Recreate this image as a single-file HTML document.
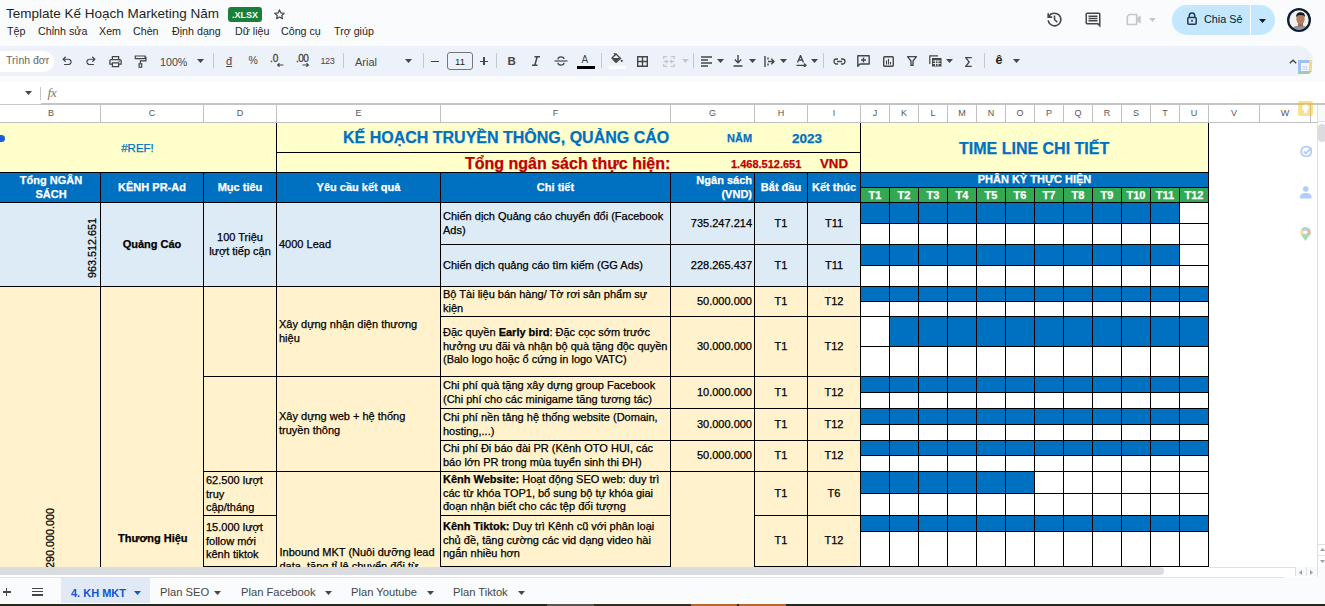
<!DOCTYPE html>
<html><head><meta charset="utf-8">
<style>
*{box-sizing:border-box;margin:0;padding:0}
html,body{width:1325px;height:606px;overflow:hidden;background:#f9fbfd;font-family:"Liberation Sans",sans-serif;position:relative}
body div,body svg{position:absolute}
#grid{left:0;top:0;width:1317px;height:567px;overflow:hidden}
.c{border:1px solid #000;font-size:11px;line-height:13.6px;color:#000;-webkit-text-stroke:0.25px currentColor;display:flex;align-items:center;overflow:hidden}
.c span{position:static}
.c.m{justify-content:center;text-align:center}
.c.l{justify-content:flex-start;text-align:left;padding:0 0 0 2px}
.c.r{justify-content:flex-end;text-align:right;padding:0 2px}
.c.b{font-weight:bold}
.c.hd{color:#fff;font-weight:bold}
.t{white-space:nowrap;font-size:11px;line-height:1;color:#000;-webkit-text-stroke:0.25px currentColor}
.rot{transform-origin:0 0}
.ch{top:104px;height:18px;font-size:9px;line-height:19px;text-align:center;color:#575757}
.menu{top:25px;font-size:10.7px;color:#1f1f1f;line-height:12px;white-space:nowrap}
.ic{fill:none;stroke:#444746;stroke-width:2}
.sep{top:53px;width:1px;height:15px;background:#c7c7c7}
.tab{top:586px;font-size:11.2px;line-height:12px;color:#444746;white-space:nowrap}
</style></head><body>
<!-- title bar -->
<div style="left:6px;top:6px;font-size:13.5px;line-height:16px;color:#1f1f1f;white-space:nowrap">Template Kế Hoạch Marketing Năm</div>
<div style="left:228px;top:7px;width:34px;height:15px;border-radius:3px;background:#188038;color:#fff;font-size:9px;font-weight:bold;line-height:16px;text-align:center">.XLSX</div>
<svg style="left:273px;top:8px" width="13" height="13" viewBox="0 0 24 24"><path d="M12 3.5l2.6 5.6 6.1.6-4.6 4.1 1.3 6-5.4-3.1-5.4 3.1 1.3-6-4.6-4.1 6.1-.6z" fill="none" stroke="#444746" stroke-width="2.2" stroke-linejoin="round"/></svg>
<div class="menu" style="left:7px">Tệp</div>
<div class="menu" style="left:38px">Chỉnh sửa</div>
<div class="menu" style="left:99px">Xem</div>
<div class="menu" style="left:133px">Chèn</div>
<div class="menu" style="left:172px">Định dạng</div>
<div class="menu" style="left:235px">Dữ liệu</div>
<div class="menu" style="left:281px">Công cụ</div>
<div class="menu" style="left:334px">Trợ giúp</div>

<!-- top right -->
<svg style="left:1045px;top:10px" width="19" height="19" viewBox="0 -960 960 960"><path fill="#444746" d="M480-120q-138 0-240.5-91.5T122-440h82q14 104 92.5 172T480-200q117 0 198.5-81.5T760-480q0-117-81.5-198.5T480-760q-69 0-129 32t-101 88h110v80H120v-240h80v94q51-64 124.5-99T480-840q75 0 140.5 28.5t114 77q48.5 48.5 77 114T840-480q0 75-28.5 140.5t-77 114q-48.5 48.5-114 77T480-120Zm112-192L440-464v-216h80v184l128 128-56 56Z"/></svg>
<svg style="left:1083.5px;top:10.5px" width="18" height="18" viewBox="0 -960 960 960"><path fill="#444746" d="M240-400h480v-80H240v80Zm0-120h480v-80H240v80Zm0-120h480v-80H240v80ZM880-80 720-240H160q-33 0-56.5-23.5T80-320v-480q0-33 23.5-56.5T160-880h640q33 0 56.5 23.5T880-800v720ZM160-320h594l46 45v-525H160v480Z"/></svg>
<svg style="left:1126px;top:13px" width="16" height="13" viewBox="0 0 24 19"><path d="M5 2h11v15H2V5z" fill="none" stroke="#c4c7c5" stroke-width="2.4" stroke-linejoin="round"/><path d="M17 7l5-3.5v12L17 12z" fill="#c4c7c5"/></svg>
<svg style="left:1149px;top:18px" width="7" height="4" viewBox="0 0 7 4"><path d="M0 0h7L3.5 4z" fill="#c4c7c5"/></svg>
<div style="left:1172px;top:5px;width:103px;height:30px;border-radius:15px;background:#c2e7ff"></div>
<div style="left:1250px;top:5px;width:1px;height:30px;background:#fff"></div>
<svg style="left:1187px;top:12px" width="10" height="13" viewBox="0 0 10 13"><path d="M2.3 5.5V3.8a2.7 2.7 0 0 1 5.4 0v1.7" fill="none" stroke="#27384a" stroke-width="1.5"/><rect x="0.8" y="5.5" width="8.4" height="6.7" rx="1" fill="none" stroke="#27384a" stroke-width="1.5"/><circle cx="5" cy="8.8" r="1" fill="#27384a"/></svg>
<div style="left:1204px;top:12.5px;font-size:10.8px;line-height:12px;color:#001d35;white-space:nowrap">Chia Sẻ</div>
<svg style="left:1259px;top:19px" width="7" height="4" viewBox="0 0 7 4"><path d="M0 0h7L3.5 4z" fill="#001d35"/></svg>
<svg style="left:1287px;top:8px" width="24" height="24" viewBox="0 0 24 24">
<defs><clipPath id="av"><circle cx="12" cy="12" r="9.7"/></clipPath></defs>
<circle cx="12" cy="12" r="12" fill="#0f1d2e"/>
<g clip-path="url(#av)"><rect width="24" height="24" fill="#f0f0f0"/><path d="M3 24c1.5-4.5 4.5-6.5 10-6.5s8 2 9 6.5z" fill="#8b94a3"/><rect x="11" y="13.5" width="5" height="5" fill="#9c6b50"/><ellipse cx="13.5" cy="11" rx="4.2" ry="5.2" fill="#b27d60"/><path d="M9 9.5c-.2-3.5 1.8-5.3 4.6-5.3 2.9 0 4.7 1.8 4.5 5.3-.8-1.7-2.3-2.4-4.5-2.4S9.8 7.8 9 9.5z" fill="#1a1616"/></g></svg>

<!-- toolbar -->
<div style="left:-30px;top:46px;width:1343px;height:30px;border-radius:15px;background:#edf2fa"></div>
<div style="left:-20px;top:51px;width:74px;height:21px;border-radius:11px;background:#fff"></div>
<div style="left:6px;top:54px;font-size:10.5px;line-height:12px;color:#666;white-space:nowrap;width:42.5px;overflow:hidden">Trình đơn</div>
<!-- undo redo -->
<svg style="left:60px;top:54px" width="14" height="14" viewBox="0 -960 960 960"><path fill="#444746" d="M280-200v-80h284q63 0 109.5-40T720-420q0-60-46.5-100T564-560H312l104 104-56 56-200-200 200-200 56 56-104 104h252q97 0 166.5 63T800-420q0 94-69.5 157T564-200H280Z"/></svg>
<svg style="left:84px;top:54px" width="14" height="14" viewBox="0 -960 960 960"><path fill="#444746" d="M396-200q-97 0-166.5-63T160-420q0-94 69.5-157T396-640h252L544-744l56-56 200 200-200 200-56-56 104-104H396q-63 0-109.5 40T240-420q0 60 46.5 100T396-280h284v80H396Z"/></svg>
<svg style="left:108px;top:54px" width="15" height="15" viewBox="0 -960 960 960"><path fill="#444746" d="M640-640v-120H320v120h-80v-200h480v200h-80Zm80 180q17 0 28.5-11.5T760-500q0-17-11.5-28.5T720-540q-17 0-28.5 11.5T680-500q0 17 11.5 28.5T720-460Zm-80 260v-160H320v160h320Zm80 80H240v-160H80v-240q0-51 35-85.5t85-34.5h560q51 0 85.5 34.5T880-520v240H720v160Zm80-240v-160q0-17-11.5-28.5T760-560H200q-17 0-28.5 11.5T160-520v160h80v-80h480v80h80Z"/></svg>
<svg style="left:133.5px;top:55px" width="13" height="13" viewBox="0 0 13 13"><path d="M1.3 1h9.8v2.6H1.3zM11.1 2.3h0.9v3.5H6.4v2.8" fill="none" stroke="#444746" stroke-width="1.2"/><rect x="5.1" y="8.8" width="2.6" height="3.4" fill="none" stroke="#444746" stroke-width="1.2"/></svg>
<div style="left:160px;top:55.5px;font-size:10.7px;line-height:12px;color:#444746">100%</div>
<svg style="left:197px;top:59px" width="7" height="4" viewBox="0 0 7 4"><path d="M0 0h7L3.5 4z" fill="#444746"/></svg>
<div class="sep" style="left:213px"></div>
<div style="left:226px;top:55px;font-size:11px;line-height:12px;color:#444746;text-decoration:underline">đ</div>
<div style="left:248.5px;top:55px;font-size:10.5px;line-height:11px;color:#444746">%</div>
<div style="left:270px;top:54px;font-size:10px;line-height:10px;color:#444746;-webkit-text-stroke:0.3px #444746">.0</div>
<svg style="left:277px;top:63px" width="7" height="4" viewBox="0 0 7 4"><path d="M0.5 2h6M2.5 0.3L0.7 2l1.8 1.7" fill="none" stroke="#444746" stroke-width="1.2"/></svg>
<div style="left:296px;top:54px;font-size:10px;line-height:10px;color:#444746;letter-spacing:-0.6px;-webkit-text-stroke:0.3px #444746">.00</div>
<svg style="left:302px;top:63px" width="7" height="4" viewBox="0 0 7 4"><path d="M0.5 2h6M4.5 0.3L6.3 2 4.5 3.7" fill="none" stroke="#444746" stroke-width="1.2"/></svg>
<div style="left:320.5px;top:56px;font-size:9px;line-height:10px;color:#444746;letter-spacing:-0.4px">123</div>
<div class="sep" style="left:343px"></div>
<div style="left:355px;top:55.5px;font-size:11px;line-height:12px;color:#444746">Arial</div>
<svg style="left:405px;top:59px" width="7" height="4" viewBox="0 0 7 4"><path d="M0 0h7L3.5 4z" fill="#444746"/></svg>
<div class="sep" style="left:423px"></div>
<div style="left:431px;top:61px;width:8px;height:1.3px;background:#444746"></div>
<div style="left:447px;top:52px;width:26px;height:18px;border:1px solid #747775;border-radius:3px"></div>
<div style="left:447px;top:55.5px;width:26px;text-align:center;font-size:9.5px;line-height:12px;color:#1f1f1f">11</div>
<div style="left:480px;top:61px;width:8px;height:1.3px;background:#444746"></div>
<div style="left:483.4px;top:57.3px;width:1.3px;height:8px;background:#444746"></div>
<div class="sep" style="left:496px"></div>
<div style="left:507.5px;top:55px;font-size:11.5px;line-height:12px;color:#444746;font-weight:bold">B</div>
<svg style="left:531px;top:56px" width="10" height="10" viewBox="0 0 10 10"><path d="M3.5 0.8h5.5M1 9.2h5.5M6.2 0.8L3.8 9.2" fill="none" stroke="#444746" stroke-width="1.5"/></svg>
<svg style="left:554px;top:56px" width="14" height="10" viewBox="0 0 14 10"><path d="M0.5 5h13" stroke="#444746" stroke-width="1.2"/><path d="M4 3.5C4 1.5 5.5 0.8 7 0.8S10 1.5 10 3M4 6.8C4 8.5 5.5 9.2 7 9.2S10 8.5 10 6.8" fill="none" stroke="#444746" stroke-width="1.3"/></svg>
<div style="left:581.5px;top:55px;font-size:10px;line-height:10px;color:#444746">A</div>
<div style="left:577px;top:66px;width:18px;height:3px;background:#000"></div>
<div class="sep" style="left:601px"></div>
<svg style="left:611px;top:53px" width="12" height="10" viewBox="0 0 12 10"><path d="M1 5L5 1l4.5 4.5L5 9.5z" fill="none" stroke="#444746" stroke-width="1.3"/><path d="M1.5 5h7.5L5 9z" fill="#444746"/><path d="M3 0.2L5 2" stroke="#444746" stroke-width="1.2"/><circle cx="10.8" cy="7.8" r="1.1" fill="#444746"/></svg>
<div style="left:609px;top:66px;width:17px;height:3px;background:#fff"></div>
<svg style="left:637px;top:55.5px" width="11" height="11" viewBox="0 0 11 11"><path d="M0.7 0.7h9.6v9.6H0.7zM5.5 0.7v9.6M0.7 5.5h9.6" fill="none" stroke="#444746" stroke-width="1.4"/></svg>
<svg style="left:663px;top:55.5px" width="12" height="11" viewBox="0 0 12 11"><path d="M0.7 3V0.7h3.5M0.7 8v2.3h3.5M11.3 3V0.7H7.8M11.3 8v2.3H7.8M0.7 5.5h3.5M7.8 5.5h3.5" fill="none" stroke="#c7c7c7" stroke-width="1.3"/><path d="M3.2 3.8L4.8 5.5 3.2 7.2M8.8 3.8L7.2 5.5 8.8 7.2" fill="none" stroke="#c7c7c7" stroke-width="1.1"/></svg>
<svg style="left:682px;top:59px" width="7" height="4" viewBox="0 0 7 4"><path d="M0 0h7L3.5 4z" fill="#c7c7c7"/></svg>
<div class="sep" style="left:693px"></div>
<svg style="left:701px;top:55.5px" width="11" height="11" viewBox="0 0 11 11"><path d="M0 1h11M0 4h7M0 7h11M0 10h7" stroke="#444746" stroke-width="1.4"/></svg>
<svg style="left:717px;top:59px" width="7" height="4" viewBox="0 0 7 4"><path d="M0 0h7L3.5 4z" fill="#444746"/></svg>
<svg style="left:733px;top:55px" width="10" height="12" viewBox="0 0 10 12"><path d="M5 0v7.5M1.8 4.5L5 7.8 8.2 4.5M0.5 11h9" fill="none" stroke="#444746" stroke-width="1.4"/></svg>
<svg style="left:748.5px;top:59px" width="7" height="4" viewBox="0 0 7 4"><path d="M0 0h7L3.5 4z" fill="#444746"/></svg>
<svg style="left:764px;top:55.5px" width="11" height="11" viewBox="0 0 11 11"><path d="M1 0v11M4 5.5h6M7.3 2.8L10 5.5 7.3 8.2M4 1.5v2M4 7.5v2" fill="none" stroke="#444746" stroke-width="1.4"/></svg>
<svg style="left:780px;top:59px" width="7" height="4" viewBox="0 0 7 4"><path d="M0 0h7L3.5 4z" fill="#444746"/></svg>
<svg style="left:796px;top:55px" width="11" height="12" viewBox="0 0 11 12"><path d="M1.5 7.5L4.5 0.5l3 7M2.8 5h3.4M0.5 10.3h9M8 8.5l2 1.8-2 1.8" fill="none" stroke="#444746" stroke-width="1.3"/></svg>
<svg style="left:811px;top:59px" width="7" height="4" viewBox="0 0 7 4"><path d="M0 0h7L3.5 4z" fill="#444746"/></svg>
<div class="sep" style="left:823px"></div>
<svg style="left:832.5px;top:57.5px" width="13" height="7" viewBox="0 0 13 7"><path d="M5 1H3.5a2.5 2.5 0 0 0 0 5H5M8 1h1.5a2.5 2.5 0 0 1 0 5H8M4 3.5h5" fill="none" stroke="#444746" stroke-width="1.3"/></svg>
<svg style="left:856.5px;top:55px" width="13" height="12" viewBox="0 0 13 12"><path d="M0.8 0.8h11.4v8.2H3L0.8 11.2z" fill="none" stroke="#444746" stroke-width="1.4" stroke-linejoin="round"/><path d="M6.5 2.5v5M4 5h5" stroke="#444746" stroke-width="1.4"/></svg>
<svg style="left:882.5px;top:56px" width="11" height="11" viewBox="0 0 11 11"><rect x="0.7" y="0.7" width="9.6" height="9.6" rx="1" fill="none" stroke="#444746" stroke-width="1.4"/><path d="M3.5 4.5v4M5.5 2.8v5.7M7.5 6v2.5" stroke="#444746" stroke-width="1.1"/></svg>
<svg style="left:907px;top:56px" width="10" height="10" viewBox="0 0 10 10"><path d="M0.5 0.7h9L6 5v4.5H4V5z" fill="none" stroke="#444746" stroke-width="1.3" stroke-linejoin="round"/></svg>
<svg style="left:928.5px;top:55px" width="13" height="12" viewBox="0 0 13 12"><path d="M0.8 9V0.8H9" fill="none" stroke="#444746" stroke-width="1.2"/><rect x="3" y="3" width="9.5" height="8.5" fill="#444746"/><path d="M4 6h7.5M4 8.5h7.5M6.5 5v6M9 5v6" stroke="#edf2fa" stroke-width="0.9"/></svg>
<svg style="left:946px;top:59px" width="7" height="4" viewBox="0 0 7 4"><path d="M0 0h7L3.5 4z" fill="#444746"/></svg>
<svg style="left:965px;top:56.5px" width="7" height="10" viewBox="0 0 7 10"><path d="M6.8 0.7H0.8L4.2 5 0.8 9.3h6" fill="none" stroke="#444746" stroke-width="1.3"/></svg>
<div class="sep" style="left:984px"></div>
<div style="left:995.5px;top:54px;font-size:12.5px;line-height:13px;color:#1f1f1f;font-weight:bold">ê</div>
<svg style="left:1013px;top:59px" width="7" height="4" viewBox="0 0 7 4"><path d="M0 0h7L3.5 4z" fill="#444746"/></svg>
<svg style="left:1289px;top:59px" width="8" height="5" viewBox="0 0 8 5"><path d="M0.8 4.3L4 1.2l3.2 3.1" fill="none" stroke="#444746" stroke-width="1.4"/></svg>

<!-- formula bar -->
<div style="left:0;top:82px;width:1325px;height:22px;background:#fff"></div>
<svg style="left:25px;top:91px" width="7" height="4" viewBox="0 0 7 4"><path d="M0 0h7L3.5 4z" fill="#444746"/></svg>
<div style="left:40px;top:87px;width:1px;height:13px;background:#c7c7c7"></div>
<div style="left:47.5px;top:86px;font-family:'Liberation Serif',serif;font-style:italic;font-size:13.5px;line-height:14px;color:#7a7a7a;letter-spacing:-0.5px">fx</div>

<!-- grid -->
<div id="grid">
<div style="left:0;top:105px;width:1317px;height:17px;background:#fff"></div>
<div class="ch" style="left:2px;width:98px">B</div>
<div style="left:100px;top:104px;width:1px;height:19px;background:#c0c0c0"></div>
<div class="ch" style="left:101px;width:102px">C</div>
<div style="left:203px;top:104px;width:1px;height:19px;background:#c0c0c0"></div>
<div class="ch" style="left:204px;width:72px">D</div>
<div style="left:276px;top:104px;width:1px;height:19px;background:#c0c0c0"></div>
<div class="ch" style="left:277px;width:163px">E</div>
<div style="left:440px;top:104px;width:1px;height:19px;background:#c0c0c0"></div>
<div class="ch" style="left:441px;width:229px">F</div>
<div style="left:670px;top:104px;width:1px;height:19px;background:#c0c0c0"></div>
<div class="ch" style="left:671px;width:83px">G</div>
<div style="left:754px;top:104px;width:1px;height:19px;background:#c0c0c0"></div>
<div class="ch" style="left:755px;width:52px">H</div>
<div style="left:807px;top:104px;width:1px;height:19px;background:#c0c0c0"></div>
<div class="ch" style="left:808px;width:52px">I</div>
<div style="left:860px;top:104px;width:1px;height:19px;background:#c0c0c0"></div>
<div class="ch" style="left:861px;width:28px">J</div>
<div style="left:889px;top:104px;width:1px;height:19px;background:#c0c0c0"></div>
<div class="ch" style="left:890px;width:28px">K</div>
<div style="left:918px;top:104px;width:1px;height:19px;background:#c0c0c0"></div>
<div class="ch" style="left:919px;width:28px">L</div>
<div style="left:947px;top:104px;width:1px;height:19px;background:#c0c0c0"></div>
<div class="ch" style="left:948px;width:28px">M</div>
<div style="left:976px;top:104px;width:1px;height:19px;background:#c0c0c0"></div>
<div class="ch" style="left:977px;width:28px">N</div>
<div style="left:1005px;top:104px;width:1px;height:19px;background:#c0c0c0"></div>
<div class="ch" style="left:1006px;width:28px">O</div>
<div style="left:1034px;top:104px;width:1px;height:19px;background:#c0c0c0"></div>
<div class="ch" style="left:1035px;width:28px">P</div>
<div style="left:1063px;top:104px;width:1px;height:19px;background:#c0c0c0"></div>
<div class="ch" style="left:1064px;width:28px">Q</div>
<div style="left:1092px;top:104px;width:1px;height:19px;background:#c0c0c0"></div>
<div class="ch" style="left:1093px;width:28px">R</div>
<div style="left:1121px;top:104px;width:1px;height:19px;background:#c0c0c0"></div>
<div class="ch" style="left:1122px;width:28px">S</div>
<div style="left:1150px;top:104px;width:1px;height:19px;background:#c0c0c0"></div>
<div class="ch" style="left:1151px;width:28px">T</div>
<div style="left:1179px;top:104px;width:1px;height:19px;background:#c0c0c0"></div>
<div class="ch" style="left:1180px;width:28px">U</div>
<div style="left:1208px;top:104px;width:1px;height:19px;background:#c0c0c0"></div>
<div class="ch" style="left:1209px;width:50px">V</div>
<div style="left:1259px;top:104px;width:1px;height:19px;background:#c0c0c0"></div>
<div class="ch" style="left:1260px;width:50px">W</div>
<div style="left:1310px;top:104px;width:1px;height:19px;background:#c0c0c0"></div>
<div style="left:0;top:104px;width:41px;height:1px;background:#c7c7c7"></div>
<div style="left:41px;top:103px;width:1276px;height:2px;background:#c4c4c4"></div>
<div style="left:0;top:122px;width:1317px;height:1px;background:#c0c0c0"></div>
<div style="left:0;top:123px;width:1317px;height:444px;background:#fff"></div>
<div class="c m" style="left:-10px;top:123px;width:287px;height:50px;background:#ffffcc;border:none;;padding-left:11px"><span><span style="color:#0070c0;font-size:11.5px;position:relative;left:-1.5px;top:1px">#REF!</span></span></div>
<div class="c " style="left:276px;top:123px;width:585px;height:50px;background:#ffffcc;border:none;"></div>
<div class="c " style="left:860px;top:123px;width:349px;height:50px;background:#ffffcc;border:none;"></div>
<div class="c hd m" style="left:-10px;top:172px;width:111px;height:31px;background:#0070c0;;padding-left:11px"><span>Tổng NGÂN<br>SÁCH</span></div>
<div class="c hd m" style="left:100px;top:172px;width:104px;height:31px;background:#0070c0;"><span>KÊNH PR-Ad</span></div>
<div class="c hd m" style="left:203px;top:172px;width:74px;height:31px;background:#0070c0;"><span>Mục tiêu</span></div>
<div class="c hd m" style="left:276px;top:172px;width:165px;height:31px;background:#0070c0;"><span>Yêu cầu kết quả</span></div>
<div class="c hd m" style="left:440px;top:172px;width:231px;height:31px;background:#0070c0;"><span>Chi tiết</span></div>
<div class="c hd r" style="left:670px;top:172px;width:85px;height:31px;background:#0070c0;"><span>Ngân sách<br>(VND)</span></div>
<div class="c hd m" style="left:754px;top:172px;width:54px;height:31px;background:#0070c0;"><span>Bắt đầu</span></div>
<div class="c hd m" style="left:807px;top:172px;width:54px;height:31px;background:#0070c0;"><span>Kết thúc</span></div>
<div class="c hd m" style="left:860px;top:172px;width:349px;height:16px;background:#0070c0;"><span>PHÂN KỲ THỰC HIỆN</span></div>
<div class="c hd m" style="left:860px;top:187px;width:30px;height:16px;background:#34a853;padding-top:2px"><span>T1</span></div>
<div class="c hd m" style="left:889px;top:187px;width:30px;height:16px;background:#34a853;padding-top:2px"><span>T2</span></div>
<div class="c hd m" style="left:918px;top:187px;width:30px;height:16px;background:#34a853;padding-top:2px"><span>T3</span></div>
<div class="c hd m" style="left:947px;top:187px;width:30px;height:16px;background:#34a853;padding-top:2px"><span>T4</span></div>
<div class="c hd m" style="left:976px;top:187px;width:30px;height:16px;background:#34a853;padding-top:2px"><span>T5</span></div>
<div class="c hd m" style="left:1005px;top:187px;width:30px;height:16px;background:#34a853;padding-top:2px"><span>T6</span></div>
<div class="c hd m" style="left:1034px;top:187px;width:30px;height:16px;background:#34a853;padding-top:2px"><span>T7</span></div>
<div class="c hd m" style="left:1063px;top:187px;width:30px;height:16px;background:#34a853;padding-top:2px"><span>T8</span></div>
<div class="c hd m" style="left:1092px;top:187px;width:30px;height:16px;background:#34a853;padding-top:2px"><span>T9</span></div>
<div class="c hd m" style="left:1121px;top:187px;width:30px;height:16px;background:#34a853;padding-top:2px"><span>T10</span></div>
<div class="c hd m" style="left:1150px;top:187px;width:30px;height:16px;background:#34a853;padding-top:2px"><span>T11</span></div>
<div class="c hd m" style="left:1179px;top:187px;width:30px;height:16px;background:#34a853;padding-top:2px"><span>T12</span></div>
<div class="c " style="left:860px;top:202px;width:30px;height:22px;background:#0070c0;"></div>
<div class="c " style="left:860px;top:223px;width:30px;height:22px;background:#fff;"></div>
<div class="c " style="left:889px;top:202px;width:30px;height:22px;background:#0070c0;"></div>
<div class="c " style="left:889px;top:223px;width:30px;height:22px;background:#fff;"></div>
<div class="c " style="left:918px;top:202px;width:30px;height:22px;background:#0070c0;"></div>
<div class="c " style="left:918px;top:223px;width:30px;height:22px;background:#fff;"></div>
<div class="c " style="left:947px;top:202px;width:30px;height:22px;background:#0070c0;"></div>
<div class="c " style="left:947px;top:223px;width:30px;height:22px;background:#fff;"></div>
<div class="c " style="left:976px;top:202px;width:30px;height:22px;background:#0070c0;"></div>
<div class="c " style="left:976px;top:223px;width:30px;height:22px;background:#fff;"></div>
<div class="c " style="left:1005px;top:202px;width:30px;height:22px;background:#0070c0;"></div>
<div class="c " style="left:1005px;top:223px;width:30px;height:22px;background:#fff;"></div>
<div class="c " style="left:1034px;top:202px;width:30px;height:22px;background:#0070c0;"></div>
<div class="c " style="left:1034px;top:223px;width:30px;height:22px;background:#fff;"></div>
<div class="c " style="left:1063px;top:202px;width:30px;height:22px;background:#0070c0;"></div>
<div class="c " style="left:1063px;top:223px;width:30px;height:22px;background:#fff;"></div>
<div class="c " style="left:1092px;top:202px;width:30px;height:22px;background:#0070c0;"></div>
<div class="c " style="left:1092px;top:223px;width:30px;height:22px;background:#fff;"></div>
<div class="c " style="left:1121px;top:202px;width:30px;height:22px;background:#0070c0;"></div>
<div class="c " style="left:1121px;top:223px;width:30px;height:22px;background:#fff;"></div>
<div class="c " style="left:1150px;top:202px;width:30px;height:22px;background:#0070c0;"></div>
<div class="c " style="left:1150px;top:223px;width:30px;height:22px;background:#fff;"></div>
<div class="c " style="left:1179px;top:202px;width:30px;height:22px;background:#fff;"></div>
<div class="c " style="left:1179px;top:223px;width:30px;height:22px;background:#fff;"></div>
<div class="c " style="left:860px;top:244px;width:30px;height:22px;background:#0070c0;"></div>
<div class="c " style="left:860px;top:265px;width:30px;height:22px;background:#fff;"></div>
<div class="c " style="left:889px;top:244px;width:30px;height:22px;background:#0070c0;"></div>
<div class="c " style="left:889px;top:265px;width:30px;height:22px;background:#fff;"></div>
<div class="c " style="left:918px;top:244px;width:30px;height:22px;background:#0070c0;"></div>
<div class="c " style="left:918px;top:265px;width:30px;height:22px;background:#fff;"></div>
<div class="c " style="left:947px;top:244px;width:30px;height:22px;background:#0070c0;"></div>
<div class="c " style="left:947px;top:265px;width:30px;height:22px;background:#fff;"></div>
<div class="c " style="left:976px;top:244px;width:30px;height:22px;background:#0070c0;"></div>
<div class="c " style="left:976px;top:265px;width:30px;height:22px;background:#fff;"></div>
<div class="c " style="left:1005px;top:244px;width:30px;height:22px;background:#0070c0;"></div>
<div class="c " style="left:1005px;top:265px;width:30px;height:22px;background:#fff;"></div>
<div class="c " style="left:1034px;top:244px;width:30px;height:22px;background:#0070c0;"></div>
<div class="c " style="left:1034px;top:265px;width:30px;height:22px;background:#fff;"></div>
<div class="c " style="left:1063px;top:244px;width:30px;height:22px;background:#0070c0;"></div>
<div class="c " style="left:1063px;top:265px;width:30px;height:22px;background:#fff;"></div>
<div class="c " style="left:1092px;top:244px;width:30px;height:22px;background:#0070c0;"></div>
<div class="c " style="left:1092px;top:265px;width:30px;height:22px;background:#fff;"></div>
<div class="c " style="left:1121px;top:244px;width:30px;height:22px;background:#0070c0;"></div>
<div class="c " style="left:1121px;top:265px;width:30px;height:22px;background:#fff;"></div>
<div class="c " style="left:1150px;top:244px;width:30px;height:22px;background:#0070c0;"></div>
<div class="c " style="left:1150px;top:265px;width:30px;height:22px;background:#fff;"></div>
<div class="c " style="left:1179px;top:244px;width:30px;height:22px;background:#fff;"></div>
<div class="c " style="left:1179px;top:265px;width:30px;height:22px;background:#fff;"></div>
<div class="c " style="left:860px;top:286px;width:30px;height:16px;background:#0070c0;"></div>
<div class="c " style="left:860px;top:301px;width:30px;height:16px;background:#fff;"></div>
<div class="c " style="left:889px;top:286px;width:30px;height:16px;background:#0070c0;"></div>
<div class="c " style="left:889px;top:301px;width:30px;height:16px;background:#fff;"></div>
<div class="c " style="left:918px;top:286px;width:30px;height:16px;background:#0070c0;"></div>
<div class="c " style="left:918px;top:301px;width:30px;height:16px;background:#fff;"></div>
<div class="c " style="left:947px;top:286px;width:30px;height:16px;background:#0070c0;"></div>
<div class="c " style="left:947px;top:301px;width:30px;height:16px;background:#fff;"></div>
<div class="c " style="left:976px;top:286px;width:30px;height:16px;background:#0070c0;"></div>
<div class="c " style="left:976px;top:301px;width:30px;height:16px;background:#fff;"></div>
<div class="c " style="left:1005px;top:286px;width:30px;height:16px;background:#0070c0;"></div>
<div class="c " style="left:1005px;top:301px;width:30px;height:16px;background:#fff;"></div>
<div class="c " style="left:1034px;top:286px;width:30px;height:16px;background:#0070c0;"></div>
<div class="c " style="left:1034px;top:301px;width:30px;height:16px;background:#fff;"></div>
<div class="c " style="left:1063px;top:286px;width:30px;height:16px;background:#0070c0;"></div>
<div class="c " style="left:1063px;top:301px;width:30px;height:16px;background:#fff;"></div>
<div class="c " style="left:1092px;top:286px;width:30px;height:16px;background:#0070c0;"></div>
<div class="c " style="left:1092px;top:301px;width:30px;height:16px;background:#fff;"></div>
<div class="c " style="left:1121px;top:286px;width:30px;height:16px;background:#0070c0;"></div>
<div class="c " style="left:1121px;top:301px;width:30px;height:16px;background:#fff;"></div>
<div class="c " style="left:1150px;top:286px;width:30px;height:16px;background:#0070c0;"></div>
<div class="c " style="left:1150px;top:301px;width:30px;height:16px;background:#fff;"></div>
<div class="c " style="left:1179px;top:286px;width:30px;height:16px;background:#0070c0;"></div>
<div class="c " style="left:1179px;top:301px;width:30px;height:16px;background:#fff;"></div>
<div class="c " style="left:860px;top:316px;width:30px;height:31px;background:#fff;"></div>
<div class="c " style="left:860px;top:346px;width:30px;height:31px;background:#fff;"></div>
<div class="c " style="left:889px;top:316px;width:30px;height:31px;background:#0070c0;"></div>
<div class="c " style="left:889px;top:346px;width:30px;height:31px;background:#fff;"></div>
<div class="c " style="left:918px;top:316px;width:30px;height:31px;background:#0070c0;"></div>
<div class="c " style="left:918px;top:346px;width:30px;height:31px;background:#fff;"></div>
<div class="c " style="left:947px;top:316px;width:30px;height:31px;background:#0070c0;"></div>
<div class="c " style="left:947px;top:346px;width:30px;height:31px;background:#fff;"></div>
<div class="c " style="left:976px;top:316px;width:30px;height:31px;background:#0070c0;"></div>
<div class="c " style="left:976px;top:346px;width:30px;height:31px;background:#fff;"></div>
<div class="c " style="left:1005px;top:316px;width:30px;height:31px;background:#0070c0;"></div>
<div class="c " style="left:1005px;top:346px;width:30px;height:31px;background:#fff;"></div>
<div class="c " style="left:1034px;top:316px;width:30px;height:31px;background:#0070c0;"></div>
<div class="c " style="left:1034px;top:346px;width:30px;height:31px;background:#fff;"></div>
<div class="c " style="left:1063px;top:316px;width:30px;height:31px;background:#0070c0;"></div>
<div class="c " style="left:1063px;top:346px;width:30px;height:31px;background:#fff;"></div>
<div class="c " style="left:1092px;top:316px;width:30px;height:31px;background:#0070c0;"></div>
<div class="c " style="left:1092px;top:346px;width:30px;height:31px;background:#fff;"></div>
<div class="c " style="left:1121px;top:316px;width:30px;height:31px;background:#0070c0;"></div>
<div class="c " style="left:1121px;top:346px;width:30px;height:31px;background:#fff;"></div>
<div class="c " style="left:1150px;top:316px;width:30px;height:31px;background:#0070c0;"></div>
<div class="c " style="left:1150px;top:346px;width:30px;height:31px;background:#fff;"></div>
<div class="c " style="left:1179px;top:316px;width:30px;height:31px;background:#0070c0;"></div>
<div class="c " style="left:1179px;top:346px;width:30px;height:31px;background:#fff;"></div>
<div class="c " style="left:860px;top:376px;width:30px;height:17px;background:#0070c0;"></div>
<div class="c " style="left:860px;top:392px;width:30px;height:17px;background:#fff;"></div>
<div class="c " style="left:889px;top:376px;width:30px;height:17px;background:#0070c0;"></div>
<div class="c " style="left:889px;top:392px;width:30px;height:17px;background:#fff;"></div>
<div class="c " style="left:918px;top:376px;width:30px;height:17px;background:#0070c0;"></div>
<div class="c " style="left:918px;top:392px;width:30px;height:17px;background:#fff;"></div>
<div class="c " style="left:947px;top:376px;width:30px;height:17px;background:#0070c0;"></div>
<div class="c " style="left:947px;top:392px;width:30px;height:17px;background:#fff;"></div>
<div class="c " style="left:976px;top:376px;width:30px;height:17px;background:#0070c0;"></div>
<div class="c " style="left:976px;top:392px;width:30px;height:17px;background:#fff;"></div>
<div class="c " style="left:1005px;top:376px;width:30px;height:17px;background:#0070c0;"></div>
<div class="c " style="left:1005px;top:392px;width:30px;height:17px;background:#fff;"></div>
<div class="c " style="left:1034px;top:376px;width:30px;height:17px;background:#0070c0;"></div>
<div class="c " style="left:1034px;top:392px;width:30px;height:17px;background:#fff;"></div>
<div class="c " style="left:1063px;top:376px;width:30px;height:17px;background:#0070c0;"></div>
<div class="c " style="left:1063px;top:392px;width:30px;height:17px;background:#fff;"></div>
<div class="c " style="left:1092px;top:376px;width:30px;height:17px;background:#0070c0;"></div>
<div class="c " style="left:1092px;top:392px;width:30px;height:17px;background:#fff;"></div>
<div class="c " style="left:1121px;top:376px;width:30px;height:17px;background:#0070c0;"></div>
<div class="c " style="left:1121px;top:392px;width:30px;height:17px;background:#fff;"></div>
<div class="c " style="left:1150px;top:376px;width:30px;height:17px;background:#0070c0;"></div>
<div class="c " style="left:1150px;top:392px;width:30px;height:17px;background:#fff;"></div>
<div class="c " style="left:1179px;top:376px;width:30px;height:17px;background:#0070c0;"></div>
<div class="c " style="left:1179px;top:392px;width:30px;height:17px;background:#fff;"></div>
<div class="c " style="left:860px;top:408px;width:30px;height:17px;background:#0070c0;"></div>
<div class="c " style="left:860px;top:424px;width:30px;height:17px;background:#fff;"></div>
<div class="c " style="left:889px;top:408px;width:30px;height:17px;background:#0070c0;"></div>
<div class="c " style="left:889px;top:424px;width:30px;height:17px;background:#fff;"></div>
<div class="c " style="left:918px;top:408px;width:30px;height:17px;background:#0070c0;"></div>
<div class="c " style="left:918px;top:424px;width:30px;height:17px;background:#fff;"></div>
<div class="c " style="left:947px;top:408px;width:30px;height:17px;background:#0070c0;"></div>
<div class="c " style="left:947px;top:424px;width:30px;height:17px;background:#fff;"></div>
<div class="c " style="left:976px;top:408px;width:30px;height:17px;background:#0070c0;"></div>
<div class="c " style="left:976px;top:424px;width:30px;height:17px;background:#fff;"></div>
<div class="c " style="left:1005px;top:408px;width:30px;height:17px;background:#0070c0;"></div>
<div class="c " style="left:1005px;top:424px;width:30px;height:17px;background:#fff;"></div>
<div class="c " style="left:1034px;top:408px;width:30px;height:17px;background:#0070c0;"></div>
<div class="c " style="left:1034px;top:424px;width:30px;height:17px;background:#fff;"></div>
<div class="c " style="left:1063px;top:408px;width:30px;height:17px;background:#0070c0;"></div>
<div class="c " style="left:1063px;top:424px;width:30px;height:17px;background:#fff;"></div>
<div class="c " style="left:1092px;top:408px;width:30px;height:17px;background:#0070c0;"></div>
<div class="c " style="left:1092px;top:424px;width:30px;height:17px;background:#fff;"></div>
<div class="c " style="left:1121px;top:408px;width:30px;height:17px;background:#0070c0;"></div>
<div class="c " style="left:1121px;top:424px;width:30px;height:17px;background:#fff;"></div>
<div class="c " style="left:1150px;top:408px;width:30px;height:17px;background:#0070c0;"></div>
<div class="c " style="left:1150px;top:424px;width:30px;height:17px;background:#fff;"></div>
<div class="c " style="left:1179px;top:408px;width:30px;height:17px;background:#0070c0;"></div>
<div class="c " style="left:1179px;top:424px;width:30px;height:17px;background:#fff;"></div>
<div class="c " style="left:860px;top:440px;width:30px;height:16px;background:#0070c0;"></div>
<div class="c " style="left:860px;top:455px;width:30px;height:17px;background:#fff;"></div>
<div class="c " style="left:889px;top:440px;width:30px;height:16px;background:#0070c0;"></div>
<div class="c " style="left:889px;top:455px;width:30px;height:17px;background:#fff;"></div>
<div class="c " style="left:918px;top:440px;width:30px;height:16px;background:#0070c0;"></div>
<div class="c " style="left:918px;top:455px;width:30px;height:17px;background:#fff;"></div>
<div class="c " style="left:947px;top:440px;width:30px;height:16px;background:#0070c0;"></div>
<div class="c " style="left:947px;top:455px;width:30px;height:17px;background:#fff;"></div>
<div class="c " style="left:976px;top:440px;width:30px;height:16px;background:#0070c0;"></div>
<div class="c " style="left:976px;top:455px;width:30px;height:17px;background:#fff;"></div>
<div class="c " style="left:1005px;top:440px;width:30px;height:16px;background:#0070c0;"></div>
<div class="c " style="left:1005px;top:455px;width:30px;height:17px;background:#fff;"></div>
<div class="c " style="left:1034px;top:440px;width:30px;height:16px;background:#0070c0;"></div>
<div class="c " style="left:1034px;top:455px;width:30px;height:17px;background:#fff;"></div>
<div class="c " style="left:1063px;top:440px;width:30px;height:16px;background:#0070c0;"></div>
<div class="c " style="left:1063px;top:455px;width:30px;height:17px;background:#fff;"></div>
<div class="c " style="left:1092px;top:440px;width:30px;height:16px;background:#0070c0;"></div>
<div class="c " style="left:1092px;top:455px;width:30px;height:17px;background:#fff;"></div>
<div class="c " style="left:1121px;top:440px;width:30px;height:16px;background:#0070c0;"></div>
<div class="c " style="left:1121px;top:455px;width:30px;height:17px;background:#fff;"></div>
<div class="c " style="left:1150px;top:440px;width:30px;height:16px;background:#0070c0;"></div>
<div class="c " style="left:1150px;top:455px;width:30px;height:17px;background:#fff;"></div>
<div class="c " style="left:1179px;top:440px;width:30px;height:16px;background:#0070c0;"></div>
<div class="c " style="left:1179px;top:455px;width:30px;height:17px;background:#fff;"></div>
<div class="c " style="left:860px;top:471px;width:30px;height:23px;background:#0070c0;"></div>
<div class="c " style="left:860px;top:493px;width:30px;height:23px;background:#fff;"></div>
<div class="c " style="left:889px;top:471px;width:30px;height:23px;background:#0070c0;"></div>
<div class="c " style="left:889px;top:493px;width:30px;height:23px;background:#fff;"></div>
<div class="c " style="left:918px;top:471px;width:30px;height:23px;background:#0070c0;"></div>
<div class="c " style="left:918px;top:493px;width:30px;height:23px;background:#fff;"></div>
<div class="c " style="left:947px;top:471px;width:30px;height:23px;background:#0070c0;"></div>
<div class="c " style="left:947px;top:493px;width:30px;height:23px;background:#fff;"></div>
<div class="c " style="left:976px;top:471px;width:30px;height:23px;background:#0070c0;"></div>
<div class="c " style="left:976px;top:493px;width:30px;height:23px;background:#fff;"></div>
<div class="c " style="left:1005px;top:471px;width:30px;height:23px;background:#0070c0;"></div>
<div class="c " style="left:1005px;top:493px;width:30px;height:23px;background:#fff;"></div>
<div class="c " style="left:1034px;top:471px;width:30px;height:23px;background:#fff;"></div>
<div class="c " style="left:1034px;top:493px;width:30px;height:23px;background:#fff;"></div>
<div class="c " style="left:1063px;top:471px;width:30px;height:23px;background:#fff;"></div>
<div class="c " style="left:1063px;top:493px;width:30px;height:23px;background:#fff;"></div>
<div class="c " style="left:1092px;top:471px;width:30px;height:23px;background:#fff;"></div>
<div class="c " style="left:1092px;top:493px;width:30px;height:23px;background:#fff;"></div>
<div class="c " style="left:1121px;top:471px;width:30px;height:23px;background:#fff;"></div>
<div class="c " style="left:1121px;top:493px;width:30px;height:23px;background:#fff;"></div>
<div class="c " style="left:1150px;top:471px;width:30px;height:23px;background:#fff;"></div>
<div class="c " style="left:1150px;top:493px;width:30px;height:23px;background:#fff;"></div>
<div class="c " style="left:1179px;top:471px;width:30px;height:23px;background:#fff;"></div>
<div class="c " style="left:1179px;top:493px;width:30px;height:23px;background:#fff;"></div>
<div class="c " style="left:860px;top:515px;width:30px;height:17px;background:#0070c0;"></div>
<div class="c " style="left:860px;top:531px;width:30px;height:36px;background:#fff;"></div>
<div class="c " style="left:889px;top:515px;width:30px;height:17px;background:#0070c0;"></div>
<div class="c " style="left:889px;top:531px;width:30px;height:36px;background:#fff;"></div>
<div class="c " style="left:918px;top:515px;width:30px;height:17px;background:#0070c0;"></div>
<div class="c " style="left:918px;top:531px;width:30px;height:36px;background:#fff;"></div>
<div class="c " style="left:947px;top:515px;width:30px;height:17px;background:#0070c0;"></div>
<div class="c " style="left:947px;top:531px;width:30px;height:36px;background:#fff;"></div>
<div class="c " style="left:976px;top:515px;width:30px;height:17px;background:#0070c0;"></div>
<div class="c " style="left:976px;top:531px;width:30px;height:36px;background:#fff;"></div>
<div class="c " style="left:1005px;top:515px;width:30px;height:17px;background:#0070c0;"></div>
<div class="c " style="left:1005px;top:531px;width:30px;height:36px;background:#fff;"></div>
<div class="c " style="left:1034px;top:515px;width:30px;height:17px;background:#0070c0;"></div>
<div class="c " style="left:1034px;top:531px;width:30px;height:36px;background:#fff;"></div>
<div class="c " style="left:1063px;top:515px;width:30px;height:17px;background:#0070c0;"></div>
<div class="c " style="left:1063px;top:531px;width:30px;height:36px;background:#fff;"></div>
<div class="c " style="left:1092px;top:515px;width:30px;height:17px;background:#0070c0;"></div>
<div class="c " style="left:1092px;top:531px;width:30px;height:36px;background:#fff;"></div>
<div class="c " style="left:1121px;top:515px;width:30px;height:17px;background:#0070c0;"></div>
<div class="c " style="left:1121px;top:531px;width:30px;height:36px;background:#fff;"></div>
<div class="c " style="left:1150px;top:515px;width:30px;height:17px;background:#0070c0;"></div>
<div class="c " style="left:1150px;top:531px;width:30px;height:36px;background:#fff;"></div>
<div class="c " style="left:1179px;top:515px;width:30px;height:17px;background:#0070c0;"></div>
<div class="c " style="left:1179px;top:531px;width:30px;height:36px;background:#fff;"></div>
<div class="c " style="left:-10px;top:202px;width:111px;height:85px;background:#ddebf7;;padding-left:11px"></div>
<div class="c m b" style="left:100px;top:202px;width:104px;height:85px;background:#ddebf7;"><span>Quảng Cáo</span></div>
<div class="c m" style="left:203px;top:202px;width:74px;height:85px;background:#ddebf7;"><span>100 Triệu<br>lượt tiếp cận</span></div>
<div class="c l" style="left:276px;top:202px;width:165px;height:85px;background:#ddebf7;"><span>4000 Lead</span></div>
<div class="c l" style="left:440px;top:202px;width:231px;height:43px;background:#ddebf7;"><span>Chiến dịch Quảng cáo chuyển đổi (Facebook Ads)</span></div>
<div class="c r" style="left:670px;top:202px;width:85px;height:43px;background:#ddebf7;"><span>735.247.214</span></div>
<div class="c m" style="left:754px;top:202px;width:54px;height:43px;background:#ddebf7;"><span>T1</span></div>
<div class="c m" style="left:807px;top:202px;width:54px;height:43px;background:#ddebf7;"><span>T11</span></div>
<div class="c l" style="left:440px;top:244px;width:231px;height:43px;background:#ddebf7;"><span>Chiến dịch quảng cáo tìm kiếm (GG Ads)</span></div>
<div class="c r" style="left:670px;top:244px;width:85px;height:43px;background:#ddebf7;"><span>228.265.437</span></div>
<div class="c m" style="left:754px;top:244px;width:54px;height:43px;background:#ddebf7;"><span>T1</span></div>
<div class="c m" style="left:807px;top:244px;width:54px;height:43px;background:#ddebf7;"><span>T11</span></div>
<div class="c " style="left:-10px;top:286px;width:111px;height:315px;background:#fff2cc;;padding-left:11px"></div>
<div class="c " style="left:100px;top:286px;width:104px;height:315px;background:#fff2cc;"></div>
<div class="c " style="left:203px;top:286px;width:74px;height:91px;background:#fff2cc;"></div>
<div class="c " style="left:203px;top:376px;width:74px;height:96px;background:#fff2cc;"></div>
<div class="c l" style="left:203px;top:471px;width:74px;height:45px;background:#fff2cc;padding-top:2px"><span>62.500 lượt<br>truy<br>cập/tháng</span></div>
<div class="c l" style="left:203px;top:515px;width:74px;height:52px;background:#fff2cc;align-items:flex-start;padding-top:5px"><span>15.000 lượt<br>follow mới<br>kênh tiktok</span></div>
<div class="c l" style="left:276px;top:286px;width:165px;height:91px;background:#fff2cc;padding-right:3px"><span>Xây dựng nhận diện thương hiệu</span></div>
<div class="c l" style="left:276px;top:376px;width:165px;height:96px;background:#fff2cc;padding-right:3px"><span>Xây dựng web + hệ thống truyền thông</span></div>
<div class="c l" style="left:276px;top:471px;width:165px;height:130px;background:#fff2cc;"></div>
<div class="c " style="left:670px;top:471px;width:85px;height:130px;background:#fff2cc;"></div>
<div class="c l" style="left:440px;top:286px;width:231px;height:31px;background:#fff2cc;"><span>Bộ Tài liệu bán hàng/ Tờ rơi sản phẩm sự kiện</span></div>
<div class="c r" style="left:670px;top:286px;width:85px;height:31px;background:#fff2cc;"><span>50.000.000</span></div>
<div class="c m" style="left:754px;top:286px;width:54px;height:31px;background:#fff2cc;"><span>T1</span></div>
<div class="c m" style="left:807px;top:286px;width:54px;height:31px;background:#fff2cc;"><span>T12</span></div>
<div class="c l" style="left:440px;top:316px;width:231px;height:61px;background:#fff2cc;"><span>Đặc quyền <b>Early bird</b>: Đặc cọc sớm trước hưởng ưu đãi và nhận bộ quà tặng độc quyền (Balo logo hoặc ổ cứng in logo VATC)</span></div>
<div class="c r" style="left:670px;top:316px;width:85px;height:61px;background:#fff2cc;"><span>30.000.000</span></div>
<div class="c m" style="left:754px;top:316px;width:54px;height:61px;background:#fff2cc;"><span>T1</span></div>
<div class="c m" style="left:807px;top:316px;width:54px;height:61px;background:#fff2cc;"><span>T12</span></div>
<div class="c l" style="left:440px;top:376px;width:231px;height:33px;background:#fff2cc;"><span>Chi phí quà tặng xây dựng group Facebook (Chi phí cho các minigame tăng tương tác)</span></div>
<div class="c r" style="left:670px;top:376px;width:85px;height:33px;background:#fff2cc;"><span>10.000.000</span></div>
<div class="c m" style="left:754px;top:376px;width:54px;height:33px;background:#fff2cc;"><span>T1</span></div>
<div class="c m" style="left:807px;top:376px;width:54px;height:33px;background:#fff2cc;"><span>T12</span></div>
<div class="c l" style="left:440px;top:408px;width:231px;height:33px;background:#fff2cc;"><span>Chi phí nền tảng hệ thống website (Domain, hosting,...)</span></div>
<div class="c r" style="left:670px;top:408px;width:85px;height:33px;background:#fff2cc;"><span>30.000.000</span></div>
<div class="c m" style="left:754px;top:408px;width:54px;height:33px;background:#fff2cc;"><span>T1</span></div>
<div class="c m" style="left:807px;top:408px;width:54px;height:33px;background:#fff2cc;"><span>T12</span></div>
<div class="c l" style="left:440px;top:440px;width:231px;height:32px;background:#fff2cc;"><span>Chi phí Đi báo đài PR (Kênh OTO HUI, các báo lớn PR trong mùa tuyển sinh thi ĐH)</span></div>
<div class="c r" style="left:670px;top:440px;width:85px;height:32px;background:#fff2cc;"><span>50.000.000</span></div>
<div class="c m" style="left:754px;top:440px;width:54px;height:32px;background:#fff2cc;"><span>T1</span></div>
<div class="c m" style="left:807px;top:440px;width:54px;height:32px;background:#fff2cc;"><span>T12</span></div>
<div class="c l" style="left:440px;top:471px;width:231px;height:45px;background:#fff2cc;"><span><b>Kênh Website:</b> Hoạt động SEO web: duy trì các từ khóa TOP1, bổ sung bộ tự khóa giai đoạn nhận biết cho các tệp đối tượng</span></div>
<div class="c m" style="left:754px;top:471px;width:54px;height:45px;background:#fff2cc;"><span>T1</span></div>
<div class="c m" style="left:807px;top:471px;width:54px;height:45px;background:#fff2cc;"><span>T6</span></div>
<div class="c l" style="left:440px;top:515px;width:231px;height:52px;background:#fff2cc;align-items:flex-start;padding-top:4px"><span><b>Kênh Tiktok:</b> Duy trì Kênh cũ với phân loại chủ đề, tăng cường các vid dạng video hài ngắn nhiều hơn</span></div>
<div class="c m" style="left:754px;top:515px;width:54px;height:52px;background:#fff2cc;"><span>T1</span></div>
<div class="c m" style="left:807px;top:515px;width:54px;height:52px;background:#fff2cc;"><span>T12</span></div>
<div style="left:276px;top:123px;width:1px;height:49px;background:#000"></div>
<div style="left:276px;top:152px;width:585px;height:1px;background:#000"></div>
<div style="left:860px;top:123px;width:1px;height:49px;background:#000"></div>
<div style="left:1208px;top:123px;width:1px;height:49px;background:#000"></div>
<div class="t" style="left:343px;top:130px;font-size:16px;font-weight:bold;color:#0070c0">KẾ HOẠCH TRUYỀN THÔNG, QUẢNG CÁO</div>
<div class="t" style="left:727px;top:132.5px;font-size:11px;font-weight:bold;color:#0070c0">NĂM</div>
<div class="t" style="left:792px;top:131.5px;font-size:13.5px;font-weight:bold;color:#0070c0">2023</div>
<div class="t" style="left:465px;top:156px;font-size:16px;font-weight:bold;color:#c00000">Tổng ngân sách thực hiện:</div>
<div class="t" style="left:731px;top:158.5px;font-size:11px;font-weight:bold;color:#c00000">1.468.512.651</div>
<div class="t" style="left:820px;top:157px;font-size:13.3px;font-weight:bold;color:#c00000">VND</div>
<div class="t" style="left:959px;top:141px;font-size:16px;font-weight:bold;color:#0070c0">TIME LINE CHI TIẾT</div>
<div class="t rot" style="left:0;top:0;transform:translate(87px,278px) rotate(-90deg);font-size:10.8px">963.512.651</div>
<div class="t rot" style="left:0;top:0;transform:translate(45px,568px) rotate(-90deg);font-size:10.8px">290.000.000</div>
<div class="t" style="left:118px;top:532.5px;font-weight:bold">Thương Hiệu</div>
<div class="t" style="left:279.5px;top:546px;line-height:13.6px">Inbound MKT (Nuôi dưỡng lead<br>data, tăng tỉ lệ chuyển đổi từ</div>
<div style="left:0;top:134.5px;width:5px;height:7px;border-radius:0 4px 4px 0;background:#1a5fd6"></div>
</div>

<!-- side panel icons (faded) -->
<svg style="left:1298px;top:59.5px;opacity:.45" width="14" height="14" viewBox="0 0 14 14"><path d="M0 0h11v3H3v8H0z" fill="#4285f4"/><path d="M11 0h3v11h-3z" fill="#fbbc04"/><path d="M0 11h11v3H0z" fill="#34a853"/><path d="M11 11h3l-3 3z" fill="#ea4335"/><rect x="3" y="3" width="8" height="8" fill="#fff"/><text x="7" y="9.6" font-size="5.5" text-anchor="middle" fill="#4285f4" font-family="Liberation Sans">31</text></svg>
<svg style="left:1298px;top:101px;opacity:.45" width="15" height="15" viewBox="0 0 15 15"><rect width="15" height="15" rx="2" fill="#fbbc04"/><circle cx="7.5" cy="6.5" r="3.2" fill="#fff"/><rect x="6" y="9" width="3" height="3" fill="#fff"/></svg>
<svg style="left:1299.5px;top:144.5px;opacity:.4" width="12.5" height="12.5" viewBox="0 0 12 12"><circle cx="6" cy="6.3" r="4.8" fill="none" stroke="#4285f4" stroke-width="1.8"/><path d="M3.6 6.2l2 1.9L11 2.5" fill="none" stroke="#4285f4" stroke-width="1.8"/></svg>
<svg style="left:1300px;top:186px;opacity:.4" width="11.5" height="12.5" viewBox="0 0 11.5 12.5"><circle cx="5.75" cy="3" r="2.8" fill="#4285f4"/><path d="M0 12.5v-2c0-2.2 2.5-3.6 5.75-3.6s5.75 1.4 5.75 3.6v2z" fill="#4285f4"/></svg>
<svg style="left:1300px;top:227px;opacity:.4" width="11" height="14" viewBox="0 0 11 14"><path d="M5.5 14C3 10.5 0.2 8 0.2 5.3a5.3 5.3 0 0 1 10.6 0C10.8 8 8 10.5 5.5 14z" fill="#34a853"/><path d="M5.5 0A5.3 5.3 0 0 0 1.5 1.9l4 4z" fill="#4285f4"/><path d="M9.5 1.9L5.5 5.9l4.9 1.6c.3-.7.4-1.4.4-2.2 0-1.4-.5-2.5-1.3-3.4z" fill="#ea4335"/><path d="M1.5 1.9A5.3 5.3 0 0 0 .2 5.3c0 1 .3 1.9.7 2.8l4.6-2.2z" fill="#fbbc04"/><circle cx="5.5" cy="5.3" r="1.8" fill="#fff"/></svg>

<!-- vertical scrollbar -->
<div style="left:1317px;top:103px;width:8px;height:464px;background:#fff;border-left:1px solid #e0e0e0"></div><div style="left:1318px;top:105px;width:7px;height:17px;background:#f8f9fa;border-bottom:1px solid #e0e0e0"></div><div style="left:1317px;top:103px;width:8px;height:2px;background:#c4c4c4"></div>
<div style="left:1318px;top:124px;width:8px;height:18px;border-radius:4px;background:#dadce0"></div>
<div style="left:1317px;top:544px;width:8px;height:11px;border-left:1px solid #e0e0e0;border-top:1px solid #e0e0e0"></div>
<div style="left:1317px;top:555px;width:8px;height:12px;border-left:1px solid #e0e0e0;border-top:1px solid #e0e0e0"></div>
<svg style="left:1319.5px;top:548px" width="5" height="3" viewBox="0 0 5 3"><path d="M0 3h5L2.5 0z" fill="#9aa0a6"/></svg>
<svg style="left:1319.5px;top:560px" width="5" height="3" viewBox="0 0 5 3"><path d="M0 0h5L2.5 3z" fill="#9aa0a6"/></svg>

<!-- horizontal scrollbar -->
<div style="left:0;top:567px;width:1317px;height:10px;background:#fff"></div>
<div style="left:-10px;top:567px;width:1174px;height:8px;border-radius:4px;background:#dadce0"></div>
<div style="left:1209px;top:567px;width:108px;height:1px;background:#e0e0e0"></div>
<div style="left:1295px;top:567px;width:11px;height:9px;border-left:1px solid #e0e0e0;background:#f8f9fa"></div>
<div style="left:1306px;top:567px;width:11px;height:9px;border-left:1px solid #e0e0e0;background:#f8f9fa"></div>
<div style="left:1317px;top:567px;width:8px;height:10px;border-left:1px solid #e0e0e0"></div>
<svg style="left:1299px;top:569.5px" width="3" height="5" viewBox="0 0 3 5"><path d="M3 0v5L0 2.5z" fill="#9aa0a6"/></svg>
<svg style="left:1310px;top:569.5px" width="3" height="5" viewBox="0 0 3 5"><path d="M0 0v5L3 2.5z" fill="#9aa0a6"/></svg>
<div style="left:0;top:577px;width:1284px;height:1px;background:#e3e3e3"></div>

<!-- tabs -->
<div style="left:2.5px;top:591.4px;width:8.5px;height:1.3px;background:#444746"></div>
<div style="left:6.1px;top:587.8px;width:1.3px;height:8.5px;background:#444746"></div>
<div style="left:31.5px;top:588px;width:11px;height:1.3px;background:#444746"></div>
<div style="left:31.5px;top:591.2px;width:11px;height:1.3px;background:#444746"></div>
<div style="left:31.5px;top:594.4px;width:11px;height:1.3px;background:#444746"></div>
<div style="left:61px;top:578px;width:89px;height:25px;background:#e1e9f7"></div>
<div style="left:71px;top:586.5px;font-size:11px;font-weight:bold;line-height:12px;color:#0b57d0;white-space:nowrap">4. KH MKT</div>
<svg style="left:134px;top:590.5px" width="7" height="4" viewBox="0 0 7 4"><path d="M0 0h7L3.5 4z" fill="#0b57d0"/></svg>
<div class="tab" style="left:160px">Plan SEO</div>
<svg style="left:214px;top:590.5px" width="7" height="4" viewBox="0 0 7 4"><path d="M0 0h7L3.5 4z" fill="#444746"/></svg>
<div class="tab" style="left:241px">Plan Facebook</div>
<svg style="left:325px;top:590.5px" width="7" height="4" viewBox="0 0 7 4"><path d="M0 0h7L3.5 4z" fill="#444746"/></svg>
<div class="tab" style="left:351px">Plan Youtube</div>
<svg style="left:427px;top:590.5px" width="7" height="4" viewBox="0 0 7 4"><path d="M0 0h7L3.5 4z" fill="#444746"/></svg>
<div class="tab" style="left:453px">Plan Tiktok</div>
<svg style="left:518px;top:590.5px" width="7" height="4" viewBox="0 0 7 4"><path d="M0 0h7L3.5 4z" fill="#444746"/></svg>
<div style="left:0;top:603px;width:1325px;height:1px;background:#fbfcfd"></div><div style="left:0;top:604px;width:1325px;height:2px;background:#24271b"></div><div style="left:547px;top:604px;width:47px;height:2px;background:#5b5650"></div><div style="left:594px;top:604px;width:97px;height:2px;background:#372b23"></div><div style="left:691px;top:604px;width:46px;height:2px;background:#b5692f"></div><div style="left:739px;top:604px;width:47px;height:2px;background:#b5692f"></div>
</body></html>
